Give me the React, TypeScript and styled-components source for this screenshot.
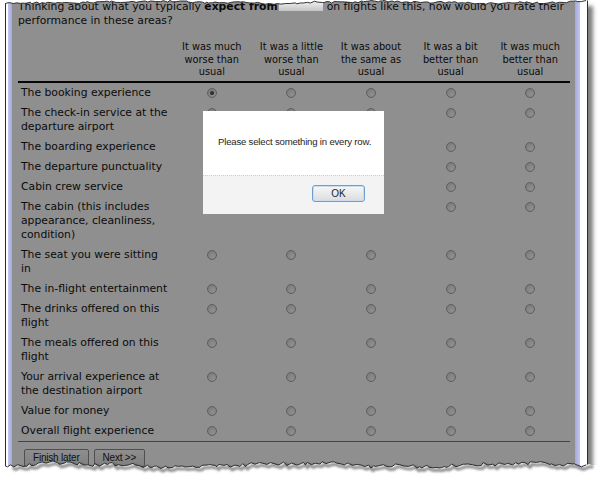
import React from "react";
import styled, { createGlobalStyle, css } from "styled-components";

const GlobalStyle = createGlobalStyle`
  html, body { margin: 0; padding: 0; background: #ffffff; }
  body {
    width: 602px;
    height: 480px;
    overflow: hidden;
    font-family: "DejaVu Sans", Verdana, sans-serif;
  }
`;

const Stage = styled.div`
  position: relative;
  width: 602px;
  height: 480px;
  background: #ffffff;
`;

const Frame = styled.div`
  position: relative;
  margin-left: 5px;
  width: 581px;
  height: 470px;
  display: flex;
  border-left: 1px solid #2c2c2c;
  border-right: 1px solid #2c2c2c;
  box-shadow: 5px 6px 4px rgba(0, 0, 0, 0.5);
`;

const LeftRail = styled.div`
  flex: 0 0 6px;
  background: linear-gradient(to right, #ffffff 0 2px, #c3c7ee 2px, #a3a9dc 6px);
`;

const RightRail = styled.div`
  flex: 0 0 12px;
  background: linear-gradient(to right, #a3a9dc 0, #c3c7ee 5px, #ffffff 5px);
`;

const Page = styled.div`
  position: relative;
  isolation: isolate;
  flex: 0 0 563px;
  box-sizing: border-box;
  padding: 0 5px 0 6px;
  background: #ffffff;
  overflow: hidden;
  color: #141414;
  font-size: 10.8px;
`;

const Question = styled.p`
  margin: 0;
  line-height: 14px;
`;

const Strong = styled.b`
  font-weight: bold;
`;

const Redacted = styled.span`
  position: relative;
  z-index: 3;
  display: inline-block;
  width: 44px;
  height: 10px;
  margin: 0 4px 0 1px;
  vertical-align: -1px;
  background: linear-gradient(#f2f2f2, #d6d6d6 60%, #c4c4c4);
  filter: blur(0.6px);
`;

const Grid = styled.div`
  display: grid;
  grid-template-columns: 154px repeat(5, 1fr);
`;

const HeaderRow = styled(Grid)`
  margin-top: 13px;
  padding-bottom: 2px;
  border-bottom: 2px solid #0c0c0c;
`;

const HeaderCell = styled.div`
  align-self: end;
  text-align: center;
  font-size: 9.8px;
  line-height: 12.5px;
`;

const Row = styled(Grid)`
  padding: 3px 0;
`;

const Label = styled.div`
  padding-left: 3px;
  line-height: 14px;
`;

const Cell = styled.div`
  display: flex;
  justify-content: center;
  align-items: flex-start;
  padding-top: 2px;
`;

const Radio = styled.span<{ $checked?: boolean }>`
  position: relative;
  box-sizing: border-box;
  width: 10px;
  height: 10px;
  border-radius: 50%;
  border: 1px solid #a8a8a8;
  background: radial-gradient(circle at 65% 70%, #ffffff 0, #ececec 45%, #d0d0d0 100%);
  ${(p) =>
    p.$checked &&
    css`
      &::after {
        content: "";
        position: absolute;
        inset: 2px;
        border-radius: 50%;
        background: radial-gradient(circle at 40% 40%, #6a6a6a, #2a2a2a);
      }
    `}
`;

const FooterRule = styled.div`
  border-top: 1px solid #7a7a7a;
`;

const ButtonBar = styled.div`
  display: flex;
  gap: 5px;
  padding: 7px 0 0 6px;
`;

const NavButton = styled.button`
  height: 18px;
  padding: 0 8px;
  border: 1px solid #8e8e8e;
  border-radius: 2px;
  background: linear-gradient(#fdfdfd, #e4e4e4);
  color: #1e1e1e;
  font-family: "Liberation Sans", Arial, sans-serif;
  font-size: 10px;
  letter-spacing: -0.2px;
  line-height: 16px;
`;

const Backdrop = styled.div`
  position: absolute;
  inset: 0;
  z-index: 1;
  background: rgba(0, 0, 0, 0.44);
`;

const Dialog = styled.div`
  position: absolute;
  z-index: 2;
  left: 191px;
  top: 111px;
  width: 181px;
  height: 103px;
  display: flex;
  flex-direction: column;
  background: #ffffff;
  font-family: "Liberation Sans", Arial, sans-serif;
  color: #1e1e1e;
`;

const DialogBody = styled.div`
  height: 64px;
  box-sizing: border-box;
  padding: 25px 0 0 15px;
  font-size: 9.6px;
  letter-spacing: -0.2px;
  line-height: 12px;
  white-space: nowrap;
`;

const DialogFooter = styled.div`
  flex: 1;
  display: flex;
  justify-content: flex-end;
  align-items: flex-start;
  padding: 9px 19px 0 0;
  border-top: 1px dotted #cfcfcf;
  background: #f3f3f3;
`;

const OkButton = styled.button`
  width: 53px;
  height: 17px;
  padding: 0;
  border: 1px solid #6a9fd3;
  border-radius: 3px;
  background: linear-gradient(#f7f7f7, #dcdcdc);
  box-shadow: inset 0 0 0 1px #c9def3;
  color: #1e1e1e;
  font-family: "Liberation Sans", Arial, sans-serif;
  font-size: 10px;
  line-height: 15px;
`;

const Tear = styled.svg`
  position: absolute;
  left: 0;
  display: block;
  overflow: visible;
  pointer-events: none;
  z-index: 5;
`;

// Deterministic jagged line for the torn paper edges.
function jagged(from: number, to: number, base: number, amp: number, seed: number) {
  let s = seed;
  const rnd = () => {
    s = (s * 9301 + 49297) % 233280;
    return s / 233280;
  };
  const pts: [number, number][] = [];
  let x = from;
  while (x < to) {
    const wave = Math.sin(x / 37 + seed) * amp * 0.6 + Math.sin(x / 11 + seed * 2) * amp * 0.3;
    pts.push([x, +(base + wave + (rnd() - 0.5) * amp * 1.4).toFixed(2)]);
    x += 1.5 + rnd() * 3.5;
  }
  pts.push([to, base]);
  return pts;
}

const toPath = (pts: [number, number][]) => pts.map(([x, y]) => `${x},${y}`).join(" L");

const topEdge = jagged(0, 602, 2.4, 1.4, 7);
const bottomEdge = jagged(0, 596, 10, 2.6, 3);

function TopTear() {
  return (
    <Tear width={602} height={12} style={{ top: 0 }}>
      <path d={`M0,0 L${toPath(topEdge)} L602,0 Z`} fill="#ffffff" />
      <path
        d={`M${toPath(topEdge.filter(([x]) => x >= 5 && x <= 588))}`}
        fill="none"
        stroke="#1e1e1e"
        strokeWidth={0.9}
      />
    </Tear>
  );
}

function BottomTear() {
  const shadow = bottomEdge
    .filter(([x]) => x >= 8)
    .map(([x, y]) => [x + 2, y + 2.6] as [number, number]);
  return (
    <Tear width={602} height={25} style={{ top: 455 }}>
      <defs>
        <filter id="tear-soft" x="-5%" y="-100%" width="110%" height="300%">
          <feGaussianBlur stdDeviation="1.1" />
        </filter>
      </defs>
      <path d={`M0,25 L${toPath(bottomEdge)} L602,${bottomEdge[bottomEdge.length - 1][1]} L602,25 Z`} fill="#ffffff" />
      <path
        d={`M${toPath(shadow.filter(([x]) => x <= 594))}`}
        fill="none"
        stroke="rgba(0,0,0,0.45)"
        strokeWidth={3}
        filter="url(#tear-soft)"
      />
      <path
        d={`M${toPath(bottomEdge.filter(([x]) => x >= 5 && x <= 588))}`}
        fill="none"
        stroke="#1e1e1e"
        strokeWidth={0.9}
      />
    </Tear>
  );
}

const scale = [
  ["It was much", "worse than", "usual"],
  ["It was a little", "worse than", "usual"],
  ["It was about", "the same as", "usual"],
  ["It was a bit", "better than", "usual"],
  ["It was much", "better than", "usual"],
];

const aspects: string[][] = [
  ["The booking experience"],
  ["The check-in service at the", "departure airport"],
  ["The boarding experience"],
  ["The departure punctuality"],
  ["Cabin crew service"],
  ["The cabin (this includes", "appearance, cleanliness,", "condition)"],
  ["The seat you were sitting", "in"],
  ["The in-flight entertainment"],
  ["The drinks offered on this", "flight"],
  ["The meals offered on this", "flight"],
  ["Your arrival experience at", "the destination airport"],
  ["Value for money"],
  ["Overall flight experience"],
];

export default function App() {
  return (
    <Stage>
      <GlobalStyle />
      <Frame>
        <LeftRail />
        <Page>
          <Question>
            Thinking about what you typically <Strong>expect from</Strong>
            <Redacted />
            on flights like this, how would you rate their performance in these areas?
          </Question>

          <HeaderRow>
            <div />
            {scale.map((lines, i) => (
              <HeaderCell key={i}>
                {lines.map((l, j) => (
                  <div key={j}>{l}</div>
                ))}
              </HeaderCell>
            ))}
          </HeaderRow>

          {aspects.map((lines, r) => (
            <Row key={r}>
              <Label>
                {lines.map((l, j) => (
                  <div key={j}>{l}</div>
                ))}
              </Label>
              {scale.map((_, c) => (
                <Cell key={c}>
                  <Radio $checked={r === 0 && c === 0} />
                </Cell>
              ))}
            </Row>
          ))}

          <FooterRule />
          <ButtonBar>
            <NavButton>Finish later</NavButton>
            <NavButton>Next &gt;&gt;</NavButton>
          </ButtonBar>

          <Backdrop />
          <Dialog>
            <DialogBody>Please select something in every row.</DialogBody>
            <DialogFooter>
              <OkButton>OK</OkButton>
            </DialogFooter>
          </Dialog>
        </Page>
        <RightRail />
      </Frame>
      <TopTear />
      <BottomTear />
    </Stage>
  );
}
